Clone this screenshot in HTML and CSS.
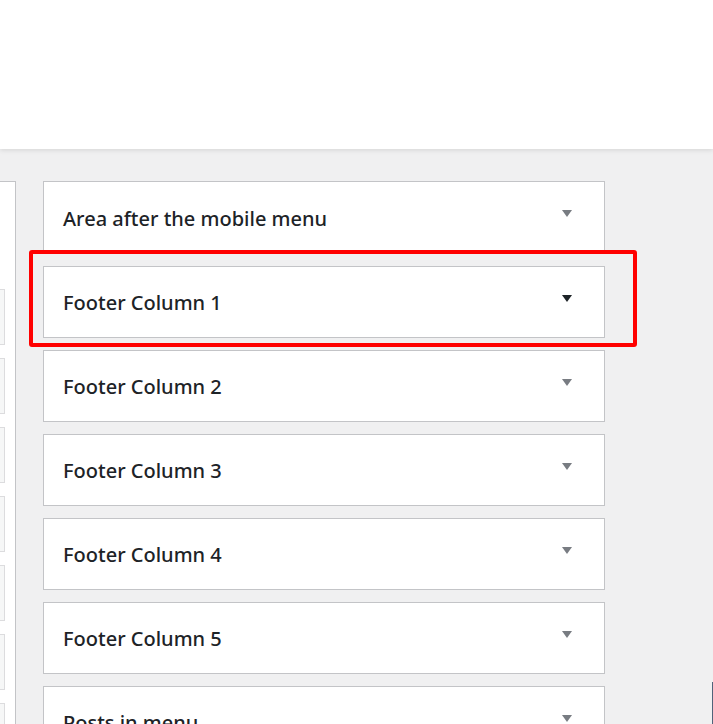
FILE: index.html
```html
<!DOCTYPE html>
<html>
<head>
<meta charset="utf-8">
<link rel="stylesheet" href="styles.css">
</head>
<body>
<div class="header"></div>
<div class="main">
  <div class="side">
    <div class="side-item"></div>
    <div class="side-item"></div>
    <div class="side-item"></div>
    <div class="side-item"></div>
    <div class="side-item"></div>
    <div class="side-item"></div>
    <div class="side-item"></div>
  </div>
  <div class="sections">
    <div class="card first"><span class="title">Area after the mobile menu</span><span class="arrow"></span></div>
    <div class="card"><span class="title">Footer Column 1</span><span class="arrow active"></span></div>
    <div class="card"><span class="title">Footer Column 2</span><span class="arrow"></span></div>
    <div class="card"><span class="title">Footer Column 3</span><span class="arrow"></span></div>
    <div class="card"><span class="title">Footer Column 4</span><span class="arrow"></span></div>
    <div class="card"><span class="title">Footer Column 5</span><span class="arrow"></span></div>
    <div class="card"><span class="title">Posts in menu</span><span class="arrow"></span></div>
  </div>
</div>
<div class="highlight"></div>
<div class="edge"></div>
</body>
</html>
```
FILE: styles.css
```css
html, body {
  margin: 0;
  padding: 0;
  height: 100%;
  overflow: hidden;
}
body {
  background: #f0f0f1;
  font-family: "Noto Sans", "Open Sans", sans-serif;
  position: relative;
}
.header {
  height: 149px;
  background: #fff;
  box-shadow: 0 1px 5px rgba(0, 0, 0, 0.12);
  position: relative;
  z-index: 1;
}
.main {
  display: flex;
  padding-top: 32px;
}
.side {
  width: 15px;
  height: 700px;
  background: #fff;
  border-top: 1px solid #c3c4c7;
  border-right: 1px solid #c3c4c7;
  padding-top: 107px;
  display: flex;
  flex-direction: column;
  gap: 13px;
}
.side-item {
  width: 4px;
  height: 54px;
  background: #f6f7f7;
  border: 1px solid #dcdcde;
  border-left: none;
}
.sections {
  margin-left: 27px;
  display: flex;
  flex-direction: column;
  gap: 12px;
}
.card {
  width: 509px;
  height: 70px;
  background: #fff;
  border: 1px solid #c3c4c7;
  display: flex;
  align-items: center;
  justify-content: space-between;
  padding: 0 32px 0 19px;
}
.card.first {
  height: 71px;
}
.title {
  font-size: 20px;
  font-weight: 500;
  color: #1d2327;
  line-height: 1;
  padding-top: 2px;
}
.arrow {
  width: 0;
  height: 0;
  border-left: 5px solid transparent;
  border-right: 5px solid transparent;
  border-top: 7px solid #787c82;
  margin-bottom: 8px;
}
.arrow.active {
  border-top-color: #1d2327;
}
.highlight {
  position: absolute;
  left: 29px;
  top: 250px;
  width: 600px;
  height: 89px;
  border: 4px solid #ff0000;
  border-radius: 3px;
  z-index: 2;
}
.edge {
  position: absolute;
  left: 712px;
  top: 682px;
  width: 1px;
  height: 42px;
  background: #50637a;
}
```
